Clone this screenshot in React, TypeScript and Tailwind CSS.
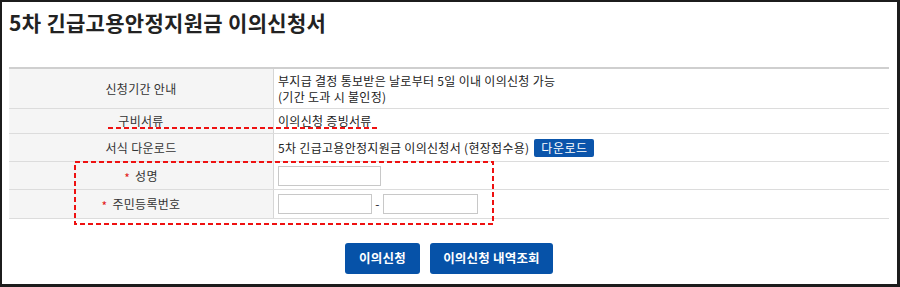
import React from "react";

const font = { fontFamily: '"Noto Sans CJK KR", "Noto Sans", sans-serif' };

function Label({ children, req }: { children: React.ReactNode; req?: boolean }) {
  return (
    <div className="bg-[#f5f5f5] border-r border-[#d6d6d6] flex items-center justify-center text-[12px] text-[#333] tracking-[0.3px]">
      {req && <span className="text-[#e21a1a] text-[12px] mr-[5px] leading-none mt-[4px]">*</span>}
      {children}
    </div>
  );
}

export default function App() {
  return (
    <div
      className="w-[900px] h-[287px] bg-white border-t-2 border-l-2 border-r-[3px] border-b-[3px] border-[#1c1c1c] relative overflow-hidden"
      style={font}
    >
      <div className="pl-[7px]">
        <h1 className="h-[65px] pt-[6px] text-[21px] leading-[28px] font-bold text-[#222] tracking-[0.3px]">
          5차 긴급고용안정지원금 이의신청서
        </h1>
        <div className="w-[880px] border-t-2 border-[#cfcfcf] text-[12px] text-[#222] tracking-[0.3px]">
          <div className="grid grid-cols-[265px_1fr] h-[40px] border-b border-[#dcdcdc]">
            <Label>신청기간 안내</Label>
            <div className="flex flex-col justify-center pl-[4px] leading-[16px]">
              <span>부지급 결정 통보받은 날로부터 5일 이내 이의신청 가능</span>
              <span>(기간 도과 시 불인정)</span>
            </div>
          </div>
          <div className="grid grid-cols-[265px_1fr] h-[25px] border-b border-[#dcdcdc]">
            <Label>구비서류</Label>
            <div className="flex items-center pl-[4px]">이의신청 증빙서류</div>
          </div>
          <div className="grid grid-cols-[265px_1fr] h-[28px] border-b border-[#dcdcdc]">
            <Label>서식 다운로드</Label>
            <div className="flex items-center pl-[4px]">
              <span>5차 긴급고용안정지원금 이의신청서 (현장접수용)</span>
              <span className="ml-[5px] h-[18px] w-[60px] rounded-[2px] bg-[#0b55ab] text-white flex items-center justify-center text-[12px] tracking-[0.5px]">
                다운로드
              </span>
            </div>
          </div>
          <div className="grid grid-cols-[265px_1fr] h-[28px] border-b border-[#dcdcdc]">
            <Label req>성명</Label>
            <div className="flex items-center pl-[4px]">
              <div className="w-[103px] h-[20px] border border-[#c8c8c8] bg-white" />
            </div>
          </div>
          <div className="grid grid-cols-[265px_1fr] h-[29px] border-b border-[#dcdcdc]">
            <Label req>주민등록번호</Label>
            <div className="flex items-center pl-[4px]">
              <div className="w-[94px] h-[20px] border border-[#c8c8c8] bg-white" />
              <span className="w-[11px] text-center text-[12px]">-</span>
              <div className="w-[95px] h-[20px] border border-[#c8c8c8] bg-white" />
            </div>
          </div>
        </div>
        <div className="w-[880px] flex justify-center gap-[10px] mt-[24px]">
          <button className="w-[75px] h-[31px] rounded-[3px] bg-[#0652a8] text-white text-[12.5px] font-bold tracking-[0.2px]">
            이의신청
          </button>
          <button className="w-[123px] h-[31px] rounded-[3px] bg-[#0652a8] text-white text-[12.5px] font-bold tracking-[0.2px]">
            이의신청 내역조회
          </button>
        </div>
      </div>

      <svg className="absolute left-[106px] top-[124px] w-[272px] h-[4px]" viewBox="0 0 272 4">
        <line x1="0" y1="2" x2="272" y2="2" stroke="#ee1111" strokeWidth="2" strokeDasharray="5 3" />
      </svg>
      <svg className="absolute left-[72px] top-[159px] w-[420px] h-[64px]" viewBox="0 0 420 64">
        <rect x="1" y="1" width="418" height="62" fill="none" stroke="#ee1111" strokeWidth="2" strokeDasharray="5 3" />
      </svg>
    </div>
  );
}
